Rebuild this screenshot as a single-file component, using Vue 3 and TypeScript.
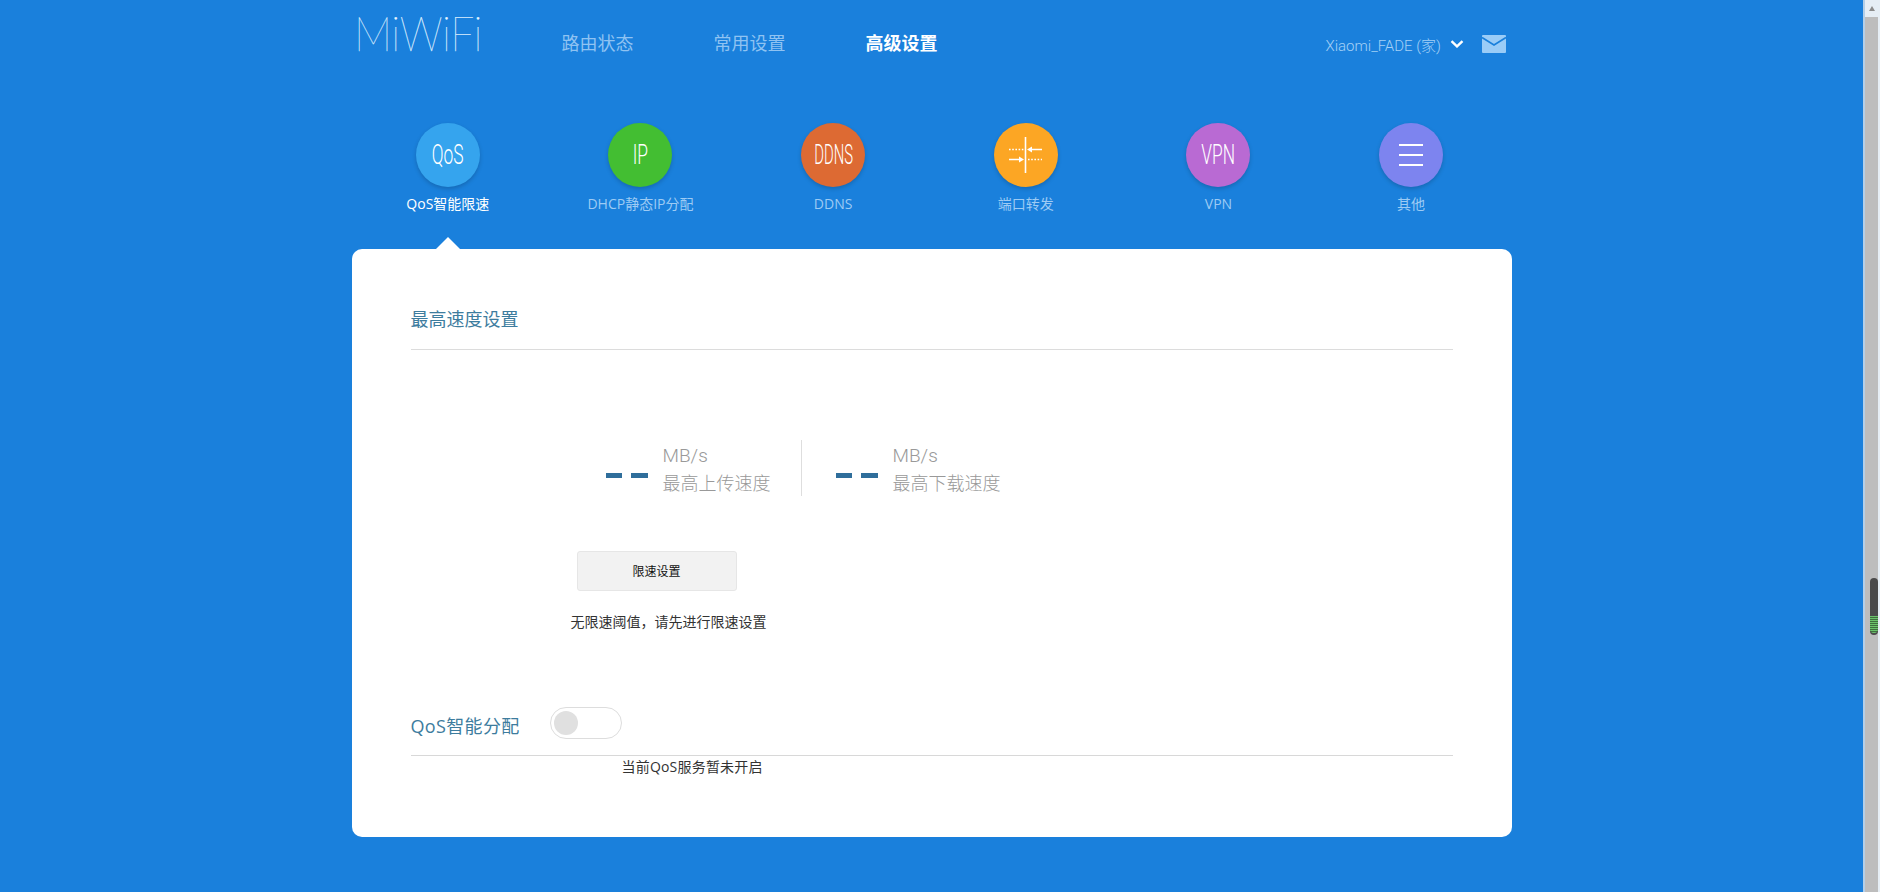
<script setup lang="ts">
const navItems = [
  { label: '路由状态', active: false },
  { label: '常用设置', active: false },
  { label: '高级设置', active: true },
]
const tabs = [
  { key: 'qos', glyph: 'QoS', label: 'QoS智能限速', active: true },
  { key: 'ip', glyph: 'IP', label: 'DHCP静态IP分配', active: false },
  { key: 'ddns', glyph: 'DDNS', label: 'DDNS', active: false },
  { key: 'port', glyph: '', label: '端口转发', active: false },
  { key: 'vpn', glyph: 'VPN', label: 'VPN', active: false },
  { key: 'other', glyph: '', label: '其他', active: false },
]
const stats = ['最高上传速度', '最高下载速度']
</script>

<template>
  <div class="page">
    <main class="main">
      <div class="wrap">
        <header class="header">
          <div class="logo"><span class="logo-text">MiWiFi</span></div>
          <nav class="nav">
            <a v-for="n in navItems" :key="n.label" class="nav-item" :class="{ active: n.active }">{{ n.label }}</a>
          </nav>
          <div class="user">
            <span class="user-name">Xiaomi_FADE (家)</span>
            <svg class="chev" width="14" height="8" viewBox="0 0 14 8"><path d="M1.5 1.2 7 6.4l5.5-5.2" fill="none" stroke="#fff" stroke-width="2.4" /></svg>
            <svg class="mail" width="24" height="18" viewBox="0 0 24 18">
              <rect width="24" height="18" rx="1" fill="#9accf7" />
              <path d="M0 2.5 12 10 24 2.5" fill="none" stroke="#1a80dc" stroke-width="1.6" />
            </svg>
          </div>
        </header>

        <div class="tabs">
          <div v-for="t in tabs" :key="t.key" class="tab" :class="{ active: t.active }">
            <div class="circle" :class="t.key">
              <span v-if="t.glyph" class="glyph">{{ t.glyph }}</span>
              <svg v-else-if="t.key === 'port'" width="64" height="64" viewBox="0 0 64 64">
                <g stroke="#fff" fill="none">
                  <path d="M31.5 14v36" stroke-width="1.6" />
                  <path d="M15 26.5h14.5M34 36.5h14" stroke-width="1.4" stroke-dasharray="1.6 1.6" />
                  <path d="M37 26.5h11M15 36.5h11" stroke-width="1.6" />
                </g>
                <path d="M33 26.5l5-3v6zM30 36.5l-5-3v6z" fill="#fff" />
              </svg>
              <span v-else class="menu"><i></i><i></i><i></i></span>
            </div>
            <div class="tab-label">{{ t.label }}</div>
          </div>
          <span class="arrow"></span>
        </div>

        <section class="card">
          <h2 class="title">最高速度设置</h2>
          <div class="stats">
            <div v-for="s in stats" :key="s" class="stat">
              <div class="dashes"><i></i><i></i></div>
              <div class="stat-text">
                <div class="unit">MB/s</div>
                <div>{{ s }}</div>
              </div>
            </div>
          </div>
          <button class="btn" type="button">限速设置</button>
          <p class="note">无限速阈值，请先进行限速设置</p>
          <div class="qos-row">
            <span class="qos-title">QoS智能分配</span>
            <span class="toggle"><i></i></span>
          </div>
          <p class="status">当前QoS服务暂未开启</p>
        </section>
      </div>
    </main>

    <aside class="scrollbar">
      <span class="sb-up"></span>
      <div class="sb-track">
        <div class="sb-thumb"><div class="sb-grip"></div></div>
      </div>
    </aside>
  </div>
</template>

<style>
html, body { margin: 0; background: #1a80dc; overflow: hidden; }
</style>

<style scoped>
.page {
  display: flex;
  height: 892px;
  overflow: hidden;
  font-family: "Roboto", "Noto Sans CJK SC", sans-serif;
}
.main { flex: 1; background: #1a80dc; min-width: 0; }
.wrap { width: 1160px; margin: 0 auto; }

.header { display: flex; align-items: center; height: 88px; position: relative; }
.logo {
  width: 207.5px;
  margin-left: 2.5px;
  height: 34px;
  margin-top: -22px;
}
.logo-text {
  display: inline-block;
  font-family: "Lato", sans-serif;
  font-weight: 100;
  font-size: 48px;
  line-height: 34px;
  letter-spacing: -0.5px;
  color: #eef7ff;
  -webkit-text-stroke: 0.25px #d8eeff;
  white-space: nowrap;
  transform: scaleX(0.89);
  transform-origin: left center;
}
.nav { display: flex; gap: 80px; }
.nav-item { font-size: 18px; line-height: 24px; color: #8fc3f2; }
.nav-item.active { color: #fff; font-weight: 700; }
.user { margin-left: auto; display: flex; align-items: center; margin-right: 6px; }
.user-name { font-size: 15px; font-weight: 300; color: #a5d0f6; width: 117px; white-space: nowrap; }
.chev { margin-left: 7px; }
.mail { margin-left: 18px; }

.tabs { display: flex; width: 1156px; height: 161px; padding-top: 35px; box-sizing: border-box; position: relative; }
.tab { width: 192.67px; display: flex; flex-direction: column; align-items: center; }
.circle {
  width: 64px;
  height: 64px;
  border-radius: 50%;
  display: flex;
  align-items: center;
  justify-content: center;
  box-shadow: 0 2px 4px rgba(0, 0, 0, 0.18);
  color: #fff;
}
.qos { background: #35a4ee; }
.ip { background: #43be32; }
.ddns { background: #dd6a33; }
.port { background: #fca624; }
.vpn { background: #b96ad3; }
.other { background: #7d84ef; }
.glyph { font-size: 28px; font-weight: 300; line-height: 32px; transform: scaleX(0.62); white-space: nowrap; }
.ddns .glyph { transform: scaleX(0.53); }
.menu { display: flex; flex-direction: column; gap: 8px; width: 24px; }
.menu i { display: block; height: 2px; background: #fff; }
.tab-label { margin-top: 7px; font-family: "Open Sans", "Noto Sans CJK SC", sans-serif; font-size: 14px; line-height: 20px; color: #9dcbf4; white-space: nowrap; }
.tab.active .tab-label { color: #fff; }
.arrow {
  position: absolute;
  left: 84px;
  bottom: 0;
  width: 0;
  height: 0;
  border-left: 12px solid transparent;
  border-right: 12px solid transparent;
  border-bottom: 12px solid #fff;
}

.card {
  height: 588px;
  box-sizing: border-box;
  background: #fff;
  border-radius: 10px;
  padding: 50px 59px 0;
}
.title {
  margin: 0;
  font-size: 18px;
  font-weight: 400;
  line-height: 40px;
  height: 49px;
  padding-top: 1px;
  color: #3d7c9e;
  border-bottom: 1px solid #dcdcdc;
}
.stats { display: flex; margin: 90px 0 0 195px; height: 56px; }
.stat { display: flex; width: 195px; box-sizing: border-box; }
.stat + .stat { border-left: 1px solid #dedede; padding-left: 34px; }
.dashes { display: flex; gap: 9px; margin-top: 33px; width: 42px; height: 5px; flex: none; }
.dashes i { display: block; width: 17px; height: 5px; background: #2f6e9b; }
.stat-text { margin-left: 15px; font-size: 18px; line-height: 27px; font-weight: 300; color: #999; white-space: nowrap; margin-top: 3px; }
.unit { font-size: 19px; margin-top: -1px; margin-bottom: 1px; }

.btn {
  display: block;
  margin: 55px 0 0 166px;
  width: 160px;
  height: 40px;
  background: #f2f2f2;
  border: 1px solid #e6e6e6;
  border-radius: 3px;
  font-family: inherit;
  font-size: 12px;
  color: #111;
  padding: 0 0 2px;
}
.note {
  margin: 21px 0 0 160px;
  font-size: 14px;
  line-height: 20px;
  color: #333;
}
.qos-row { display: flex; align-items: center; height: 48px; margin-top: 75px; border-bottom: 1px solid #d8d8d8; }
.qos-title { font-family: "Open Sans", "Noto Sans CJK SC", sans-serif; font-size: 18px; letter-spacing: 0.35px; line-height: 32px; color: #3d7c9e; width: 139px; margin-top: -11px; white-space: nowrap; }
.toggle {
  display: block;
  box-sizing: border-box;
  width: 72px;
  height: 32px;
  border: 1px solid #dddddd;
  border-radius: 16px;
  padding: 3px;
  margin-top: -16px;
}
.toggle i { display: block; width: 24px; height: 24px; border-radius: 50%; background: #e0e0e0; }
.status { margin: 1px 0 0 211px; font-family: "Open Sans", "Noto Sans CJK SC", sans-serif; font-size: 14px; letter-spacing: 0.2px; line-height: 20px; color: #333; }

.scrollbar {
  width: 17px;
  flex: none;
  background: #e6eef5;
  display: flex;
  flex-direction: column;
  border-left: 2px solid #b4cfe8;
  box-sizing: border-box;
  position: relative;
}
.sb-up {
  display: block;
  width: 0;
  height: 0;
  margin: 6px 0 0 4px;
  border-left: 3.5px solid transparent;
  border-right: 3.5px solid transparent;
  border-bottom: 5px solid #8c8c8c;
}
.sb-track { flex: 1; margin: 6px 2px 0 0; background: #bdbdbd; padding: 561px 0 0 5px; box-sizing: border-box; }
.sb-thumb { width: 8px; height: 57px; background: #4a4a4a; border-radius: 4px; padding-top: 38px; box-sizing: border-box; }
.sb-grip { height: 17px; border-radius: 0 0 4px 4px; background: repeating-linear-gradient(to bottom, #6bc36b 0 1px, #3f6f3f 1px 2px); }
</style>
